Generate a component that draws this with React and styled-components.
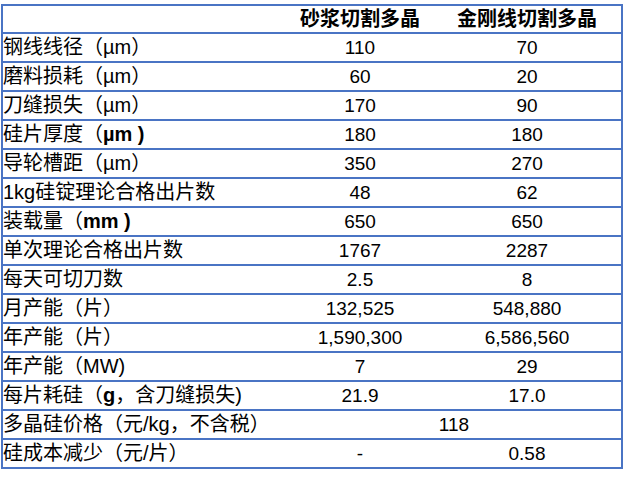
import React from "react";
import styled, { createGlobalStyle } from "styled-components";

const Global = createGlobalStyle`
  html, body { margin: 0; padding: 0; background: #ffffff; }
  body { font-family: "Liberation Sans", "Noto Sans CJK SC", sans-serif; color: #000; }
`;

const LINE = "#4a74c4";

const Table = styled.div`
  margin: 4px 0 0 1px;
  width: 622px;
  box-sizing: border-box;
  border-top: 2px solid ${LINE};
  border-left: 2px solid ${LINE};
  border-right: 2px solid ${LINE};
  display: flex;
  flex-direction: column;
`;

const Row = styled.div`
  display: grid;
  grid-template-columns: 284px 146px 1fr;
  height: ${(p) => (p.$header ? "26px" : "27px")};
  border-bottom: 2px solid ${LINE};
  align-items: center;
`;

const Label = styled.div`
  font-family: "Liberation Sans", "Noto Sans CJK SC", sans-serif;
  font-size: 20px;
  font-weight: 400;
  line-height: 27px;
  white-space: nowrap;
  overflow: hidden;
`;

const Head = styled.div`
  font-family: "Liberation Sans", "Noto Sans CJK SC", sans-serif;
  font-size: 20px;
  font-weight: 700;
  text-align: center;
  line-height: 26px;
  white-space: nowrap;
`;

const Value = styled.div`
  font-family: "Liberation Sans", "Noto Sans CJK SC", sans-serif;
  font-size: 19px;
  font-weight: 400;
  text-align: center;
  line-height: 27px;
  grid-column: ${(p) => (p.$span ? "2 / span 2" : "auto")};
`;

const B = styled.b`
  font-weight: 700;
`;

const rows = [
  [<>钢线线径（µm）</>, "110", "70"],
  [<>磨料损耗（µm）</>, "60", "20"],
  [<>刀缝损失（µm）</>, "170", "90"],
  [<>硅片厚度（<B>µm )</B></>, "180", "180"],
  [<>导轮槽距（µm）</>, "350", "270"],
  [<>1kg硅锭理论合格出片数</>, "48", "62"],
  [<>装载量（<B>mm )</B></>, "650", "650"],
  [<>单次理论合格出片数</>, "1767", "2287"],
  [<>每天可切刀数</>, "2.5", "8"],
  [<>月产能（片）</>, "132,525", "548,880"],
  [<>年产能（片）</>, "1,590,300", "6,586,560"],
  [<>年产能（MW)</>, "7", "29"],
  [<>每片耗硅（<B>g</B>，含刀缝损失)</>, "21.9", "17.0"],
  [<>多晶硅价格（元/kg，不含税）</>, "118", null],
  [<>硅成本减少（元/片）</>, "-", "0.58"],
];

export default function App() {
  return (
    <>
      <Global />
      <Table>
        <Row $header>
          <div />
          <Head>砂浆切割多晶</Head>
          <Head>金刚线切割多晶</Head>
        </Row>
        {rows.map(([label, a, b], i) => (
          <Row key={i}>
            <Label>{label}</Label>
            {b === null ? (
              <Value $span>{a}</Value>
            ) : (
              <>
                <Value>{a}</Value>
                <Value>{b}</Value>
              </>
            )}
          </Row>
        ))}
      </Table>
    </>
  );
}
